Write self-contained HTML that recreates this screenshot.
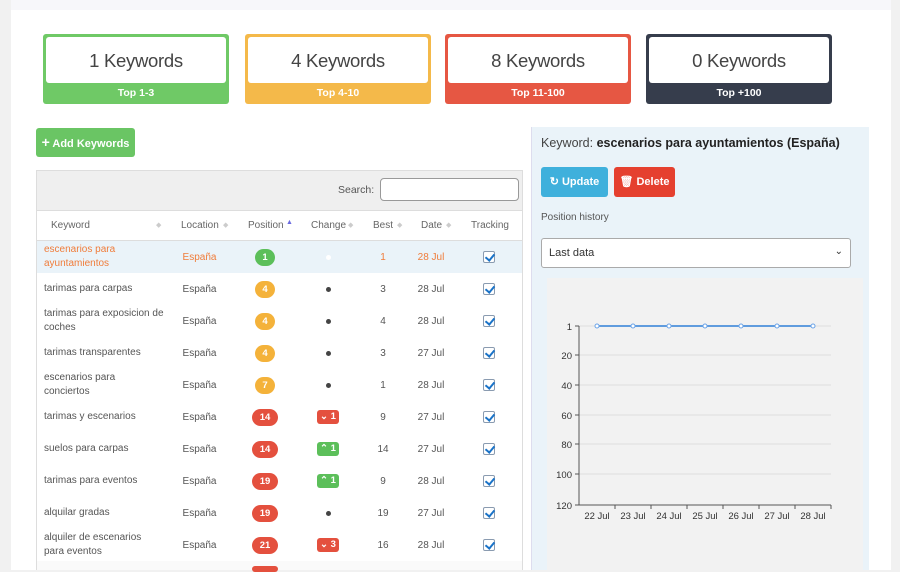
<!DOCTYPE html>
<html><head><meta charset="utf-8"><style>
*{box-sizing:border-box;margin:0;padding:0}
body{width:900px;height:570px;overflow:hidden;background:#f1f1f1;font-family:"Liberation Sans",sans-serif;position:relative;color:#555}
.a{position:absolute}
.main{left:11px;top:0;width:880px;height:570px;background:#fff}
.top{left:11px;top:0;width:880px;height:10px;background:#f7f7fa}
.card{top:34px;width:186px;height:70px;border-radius:3px}
.card .in{position:absolute;left:3px;top:3px;right:3px;height:46px;background:#fff;border-radius:3px;text-align:center;font-size:18.5px;line-height:48px;color:#444;letter-spacing:-0.3px}
.card .lb{position:absolute;left:0;right:0;top:53px;text-align:center;color:#fff;font-weight:bold;font-size:10.5px}
.btn{border-radius:3px;color:#fff;font-weight:bold;font-size:11px;text-align:center}
.row{position:absolute;left:37px;width:485px;height:32px;font-size:10px;color:#555}
.row div{position:absolute;top:0;height:32px;display:flex;align-items:center}
.kw{left:7px;width:130px;line-height:14px}
.c{justify-content:center}
.pill{display:inline-block;color:#fff;font-weight:bold;font-size:9.5px;border-radius:9px;height:17px;line-height:17px;text-align:center}
.chg{display:inline-block;color:#fff;font-weight:bold;font-size:9.5px;border-radius:3px;height:14px;line-height:14px;padding:0 3px}
.dot{display:inline-block;width:5px;height:5px;border-radius:50%;background:#444}
.cb{display:inline-block;width:12px;height:12px;border:1px solid #8a9bb0;border-radius:2px;background:#fff;position:relative}
.cb:after{content:"";position:absolute;left:3px;top:0px;width:4px;height:7px;border:solid #1a73c8;border-width:0 2px 2px 0;transform:rotate(40deg)}
.th{position:absolute;top:210px;font-size:10px;color:#666;height:31px;line-height:31px;white-space:nowrap}
.ar{position:absolute;top:0;color:#ccc;font-size:7px;line-height:31px}
</style></head><body>
<div class="a main"></div>
<div class="a top"></div>

<div class="a card" style="left:43px;background:#6fc966"><div class="in">1 Keywords</div><div class="lb">Top 1-3</div></div>
<div class="a card" style="left:245px;background:#f4b94a"><div class="in">4 Keywords</div><div class="lb">Top 4-10</div></div>
<div class="a card" style="left:445px;background:#e65743"><div class="in">8 Keywords</div><div class="lb">Top 11-100</div></div>
<div class="a card" style="left:646px;background:#363d4c"><div class="in">0 Keywords</div><div class="lb">Top +100</div></div>

<div class="a btn" style="left:36px;top:128px;width:99px;height:29px;line-height:29px;background:#6ac564"><span style="font-size:14px">+</span> Add Keywords</div>

<div class="a" style="left:36px;top:170px;width:487px;height:400px;border:1px solid #ddd;background:#fff"></div>
<div class="a" style="left:37px;top:171px;width:485px;height:39px;background:#efefef"></div>
<div class="a" style="left:338px;top:184px;font-size:10.5px;color:#555">Search:</div>
<div class="a" style="left:380px;top:178px;width:139px;height:23px;border:1px solid #999;border-radius:4px;background:#fff"></div>
<div class="a" style="left:37px;top:210px;width:485px;height:31px;border-top:1px solid #ddd;border-bottom:1px solid #ddd;background:#fff"></div>
<div class="th" style="left:51px">Keyword</div><div class="ar" style="left:156px;top:210px">&#9670;</div>
<div class="th" style="left:181px">Location</div><div class="ar" style="left:223px;top:210px">&#9670;</div>
<div class="th" style="left:248px">Position</div><div class="ar" style="left:286px;top:207px;color:#6b6be0">&#9650;</div>
<div class="th" style="left:311px">Change</div><div class="ar" style="left:348px;top:210px">&#9670;</div>
<div class="th" style="left:373px">Best</div><div class="ar" style="left:397px;top:210px">&#9670;</div>
<div class="th" style="left:421px">Date</div><div class="ar" style="left:446px;top:210px">&#9670;</div>
<div class="th" style="left:471px">Tracking</div>

<div class="row" style="top:241px;background:#eaf3f9;color:#f07c3a"><div class="kw">escenarios para<br>ayuntamientos</div><div class="c" style="left:140px;width:45px">España</div><div class="c" style="left:218px;width:20px"><span class="pill" style="background:#5cbf5a;width:20px">1</span></div><div class="c" style="left:286px;width:10px"><span class="dot" style="background:#fff"></span></div><div class="c" style="left:336px;width:20px">1</div><div class="c" style="left:378px;width:32px">28 Jul</div><div class="c" style="left:444px;width:16px"><span class="cb"></span></div></div>

<div class="row" style="top:273px"><div class="kw">tarimas para carpas</div><div class="c" style="left:140px;width:45px">España</div><div class="c" style="left:218px;width:20px"><span class="pill" style="background:#f4b23a;width:20px">4</span></div><div class="c" style="left:286px;width:10px"><span class="dot"></span></div><div class="c" style="left:336px;width:20px">3</div><div class="c" style="left:378px;width:32px">28 Jul</div><div class="c" style="left:444px;width:16px"><span class="cb"></span></div></div>

<div class="row" style="top:305px"><div class="kw">tarimas para exposicion de<br>coches</div><div class="c" style="left:140px;width:45px">España</div><div class="c" style="left:218px;width:20px"><span class="pill" style="background:#f4b23a;width:20px">4</span></div><div class="c" style="left:286px;width:10px"><span class="dot"></span></div><div class="c" style="left:336px;width:20px">4</div><div class="c" style="left:378px;width:32px">28 Jul</div><div class="c" style="left:444px;width:16px"><span class="cb"></span></div></div>

<div class="row" style="top:337px"><div class="kw">tarimas transparentes</div><div class="c" style="left:140px;width:45px">España</div><div class="c" style="left:218px;width:20px"><span class="pill" style="background:#f4b23a;width:20px">4</span></div><div class="c" style="left:286px;width:10px"><span class="dot"></span></div><div class="c" style="left:336px;width:20px">3</div><div class="c" style="left:378px;width:32px">27 Jul</div><div class="c" style="left:444px;width:16px"><span class="cb"></span></div></div>

<div class="row" style="top:369px"><div class="kw">escenarios para<br>conciertos</div><div class="c" style="left:140px;width:45px">España</div><div class="c" style="left:218px;width:20px"><span class="pill" style="background:#f4b23a;width:20px">7</span></div><div class="c" style="left:286px;width:10px"><span class="dot"></span></div><div class="c" style="left:336px;width:20px">1</div><div class="c" style="left:378px;width:32px">28 Jul</div><div class="c" style="left:444px;width:16px"><span class="cb"></span></div></div>

<div class="row" style="top:401px"><div class="kw">tarimas y escenarios</div><div class="c" style="left:140px;width:45px">España</div><div class="c" style="left:215px;width:26px"><span class="pill" style="background:#e4503e;width:26px">14</span></div><div class="c" style="left:276px;width:30px"><span class="chg" style="background:#e4503e">&#8964; 1</span></div><div class="c" style="left:336px;width:20px">9</div><div class="c" style="left:378px;width:32px">27 Jul</div><div class="c" style="left:444px;width:16px"><span class="cb"></span></div></div>

<div class="row" style="top:433px"><div class="kw">suelos para carpas</div><div class="c" style="left:140px;width:45px">España</div><div class="c" style="left:215px;width:26px"><span class="pill" style="background:#e4503e;width:26px">14</span></div><div class="c" style="left:276px;width:30px"><span class="chg" style="background:#5cbf5a">&#8963; 1</span></div><div class="c" style="left:336px;width:20px">14</div><div class="c" style="left:378px;width:32px">27 Jul</div><div class="c" style="left:444px;width:16px"><span class="cb"></span></div></div>

<div class="row" style="top:465px"><div class="kw">tarimas para eventos</div><div class="c" style="left:140px;width:45px">España</div><div class="c" style="left:215px;width:26px"><span class="pill" style="background:#e4503e;width:26px">19</span></div><div class="c" style="left:276px;width:30px"><span class="chg" style="background:#5cbf5a">&#8963; 1</span></div><div class="c" style="left:336px;width:20px">9</div><div class="c" style="left:378px;width:32px">28 Jul</div><div class="c" style="left:444px;width:16px"><span class="cb"></span></div></div>

<div class="row" style="top:497px"><div class="kw">alquilar gradas</div><div class="c" style="left:140px;width:45px">España</div><div class="c" style="left:215px;width:26px"><span class="pill" style="background:#e4503e;width:26px">19</span></div><div class="c" style="left:286px;width:10px"><span class="dot"></span></div><div class="c" style="left:336px;width:20px">19</div><div class="c" style="left:378px;width:32px">27 Jul</div><div class="c" style="left:444px;width:16px"><span class="cb"></span></div></div>

<div class="row" style="top:529px"><div class="kw">alquiler de escenarios<br>para eventos</div><div class="c" style="left:140px;width:45px">España</div><div class="c" style="left:215px;width:26px"><span class="pill" style="background:#e4503e;width:26px">21</span></div><div class="c" style="left:276px;width:30px"><span class="chg" style="background:#e4503e">&#8964; 3</span></div><div class="c" style="left:336px;width:20px">16</div><div class="c" style="left:378px;width:32px">28 Jul</div><div class="c" style="left:444px;width:16px"><span class="cb"></span></div></div>
<div class="a" style="left:37px;top:561px;width:485px;height:9px;background:#fafafa"></div>
<div class="a" style="left:252px;top:566px;width:26px;height:6px;border-radius:9px;background:#e4503e"></div>

<div class="a" style="left:531px;top:127px;width:338px;height:443px;background:#eaf3f9;border-left:1px solid #dde"></div>
<div class="a" style="left:541px;top:136px;font-size:12.5px;color:#444">Keyword: <span style="color:#222;font-weight:bold">escenarios para ayuntamientos (España)</span></div>
<div class="a btn" style="left:541px;top:167px;width:67px;height:30px;line-height:30px;background:#3fb0dc">&#8635; Update</div>
<div class="a btn" style="left:614px;top:167px;width:61px;height:30px;line-height:30px;background:#e5402f">&#128465;&#xFE0E; Delete</div>
<div class="a" style="left:541px;top:212px;font-size:10px;color:#555">Position history</div>
<div class="a" style="left:541px;top:238px;width:310px;height:30px;border:1px solid #aaa;border-radius:3px;background:#fff;font-size:11px;line-height:28px;padding-left:7px;color:#333">Last data<span style="position:absolute;right:7px;top:-1px;font-size:10px">&#8964;</span></div>

<svg class="a" style="left:547px;top:278px" width="316" height="292">
<rect width="316" height="292" fill="#f2f2f2"/>
<g transform="translate(-547,-278)" font-family="Liberation Sans" font-size="9.5" fill="#333">
<g stroke="#ddd"><line x1="579" y1="355" x2="831" y2="355"/><line x1="579" y1="385" x2="831" y2="385"/><line x1="579" y1="415" x2="831" y2="415"/><line x1="579" y1="444" x2="831" y2="444"/><line x1="579" y1="474" x2="831" y2="474"/><line x1="579" y1="326" x2="831" y2="326"/></g>
<g stroke="#555"><line x1="579" y1="326" x2="579" y2="505"/><line x1="579" y1="505" x2="831" y2="505"/>
<line x1="575" y1="326" x2="579" y2="326"/><line x1="575" y1="355" x2="579" y2="355"/><line x1="575" y1="385" x2="579" y2="385"/><line x1="575" y1="415" x2="579" y2="415"/><line x1="575" y1="444" x2="579" y2="444"/><line x1="575" y1="474" x2="579" y2="474"/><line x1="575" y1="505" x2="579" y2="505"/>
<line x1="615" y1="505" x2="615" y2="509"/><line x1="651" y1="505" x2="651" y2="509"/><line x1="687" y1="505" x2="687" y2="509"/><line x1="723" y1="505" x2="723" y2="509"/><line x1="759" y1="505" x2="759" y2="509"/><line x1="795" y1="505" x2="795" y2="509"/><line x1="831" y1="505" x2="831" y2="509"/></g>
<g text-anchor="end"><text x="572" y="330">1</text><text x="572" y="359">20</text><text x="572" y="389">40</text><text x="572" y="419">60</text><text x="572" y="448">80</text><text x="572" y="478">100</text><text x="572" y="509">120</text></g>
<g text-anchor="middle"><text x="597" y="519">22 Jul</text><text x="633" y="519">23 Jul</text><text x="669" y="519">24 Jul</text><text x="705" y="519">25 Jul</text><text x="741" y="519">26 Jul</text><text x="777" y="519">27 Jul</text><text x="813" y="519">28 Jul</text></g>
<line x1="597" y1="326" x2="813" y2="326" stroke="#2f7fd8" stroke-width="1.5"/>
<g fill="#fff" stroke="#6aa3e8"><circle cx="597" cy="326" r="2"/><circle cx="633" cy="326" r="2"/><circle cx="669" cy="326" r="2"/><circle cx="705" cy="326" r="2"/><circle cx="741" cy="326" r="2"/><circle cx="777" cy="326" r="2"/><circle cx="813" cy="326" r="2"/></g>
</g></svg>
</body></html>
